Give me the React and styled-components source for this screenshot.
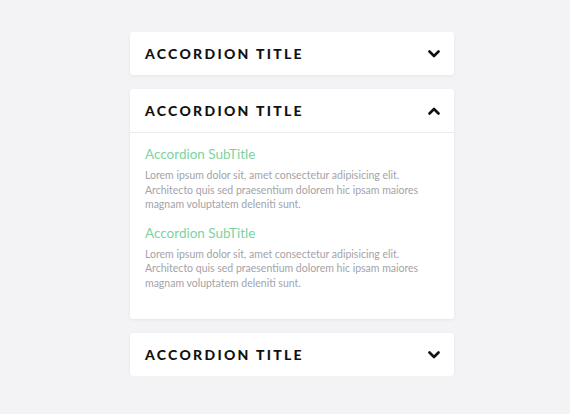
import React, { useState } from 'react'
import styled, { createGlobalStyle } from 'styled-components'

const Global = createGlobalStyle`
  body {
    margin: 0;
    background: #f3f3f6;
    font-family: Lato, "Noto Sans", sans-serif;
  }
`

const Page = styled.div`
  padding: 32px 0 0 14px;
`

const Wrap = styled.div`
  width: 324px;
  margin: 0 auto;
  display: flex;
  flex-direction: column;
  gap: 14px;
`

const Card = styled.div`
  background: #fff;
  border-radius: 3px;
  box-shadow: 0 1px 3px rgba(0, 0, 0, 0.06);
`

const Head = styled.div`
  height: 43px;
  display: flex;
  align-items: center;
  justify-content: space-between;
  padding: 0 14px 0 15px;
  cursor: pointer;
  border-bottom: ${p => (p.$open ? '1px solid #ececef' : 'none')};
`

const Title = styled.h3`
  margin: 0;
  font-size: 14px;
  font-weight: 900;
  letter-spacing: 2.3px;
  color: #111;
`

const Body = styled.div`
  padding: 13px 15px 29px;
`

const Sub = styled.h4`
  margin: 0 0 6px;
  font-size: 13.5px;
  font-weight: 400;
  color: #7dd3a1;
`

const Text = styled.p`
  margin: 0 0 13px;
  max-width: 276px;
  font-size: 10.5px;
  line-height: 14.5px;
  color: #a3a3a8;
  &:last-child {
    margin-bottom: 0;
  }
`

const Chevron = ({ up }) => (
  <svg width="12" height="8" viewBox="0 0 12 8" style={{ transform: up ? 'rotate(180deg)' : 'none' }}>
    <path d="M1.5 1.5 L6 6 L10.5 1.5" fill="none" stroke="#111" strokeWidth="2.6" strokeLinecap="round" strokeLinejoin="round" />
  </svg>
)

const lorem = 'Lorem ipsum dolor sit, amet consectetur adipisicing elit. Architecto quis sed praesentium dolorem hic ipsam maiores magnam voluptatem deleniti sunt.'

const Item = ({ open, onToggle }) => (
  <Card>
    <Head $open={open} onClick={onToggle}>
      <Title>ACCORDION TITLE</Title>
      <Chevron up={open} />
    </Head>
    {open && (
      <Body>
        <Sub>Accordion SubTitle</Sub>
        <Text>{lorem}</Text>
        <Sub>Accordion SubTitle</Sub>
        <Text>{lorem}</Text>
      </Body>
    )}
  </Card>
)

export default function App() {
  const [open, setOpen] = useState(1)
  return (
    <Page>
      <Global />
      <Wrap>
        {[0, 1, 2].map(i => (
          <Item key={i} open={open === i} onToggle={() => setOpen(open === i ? -1 : i)} />
        ))}
      </Wrap>
    </Page>
  )
}
